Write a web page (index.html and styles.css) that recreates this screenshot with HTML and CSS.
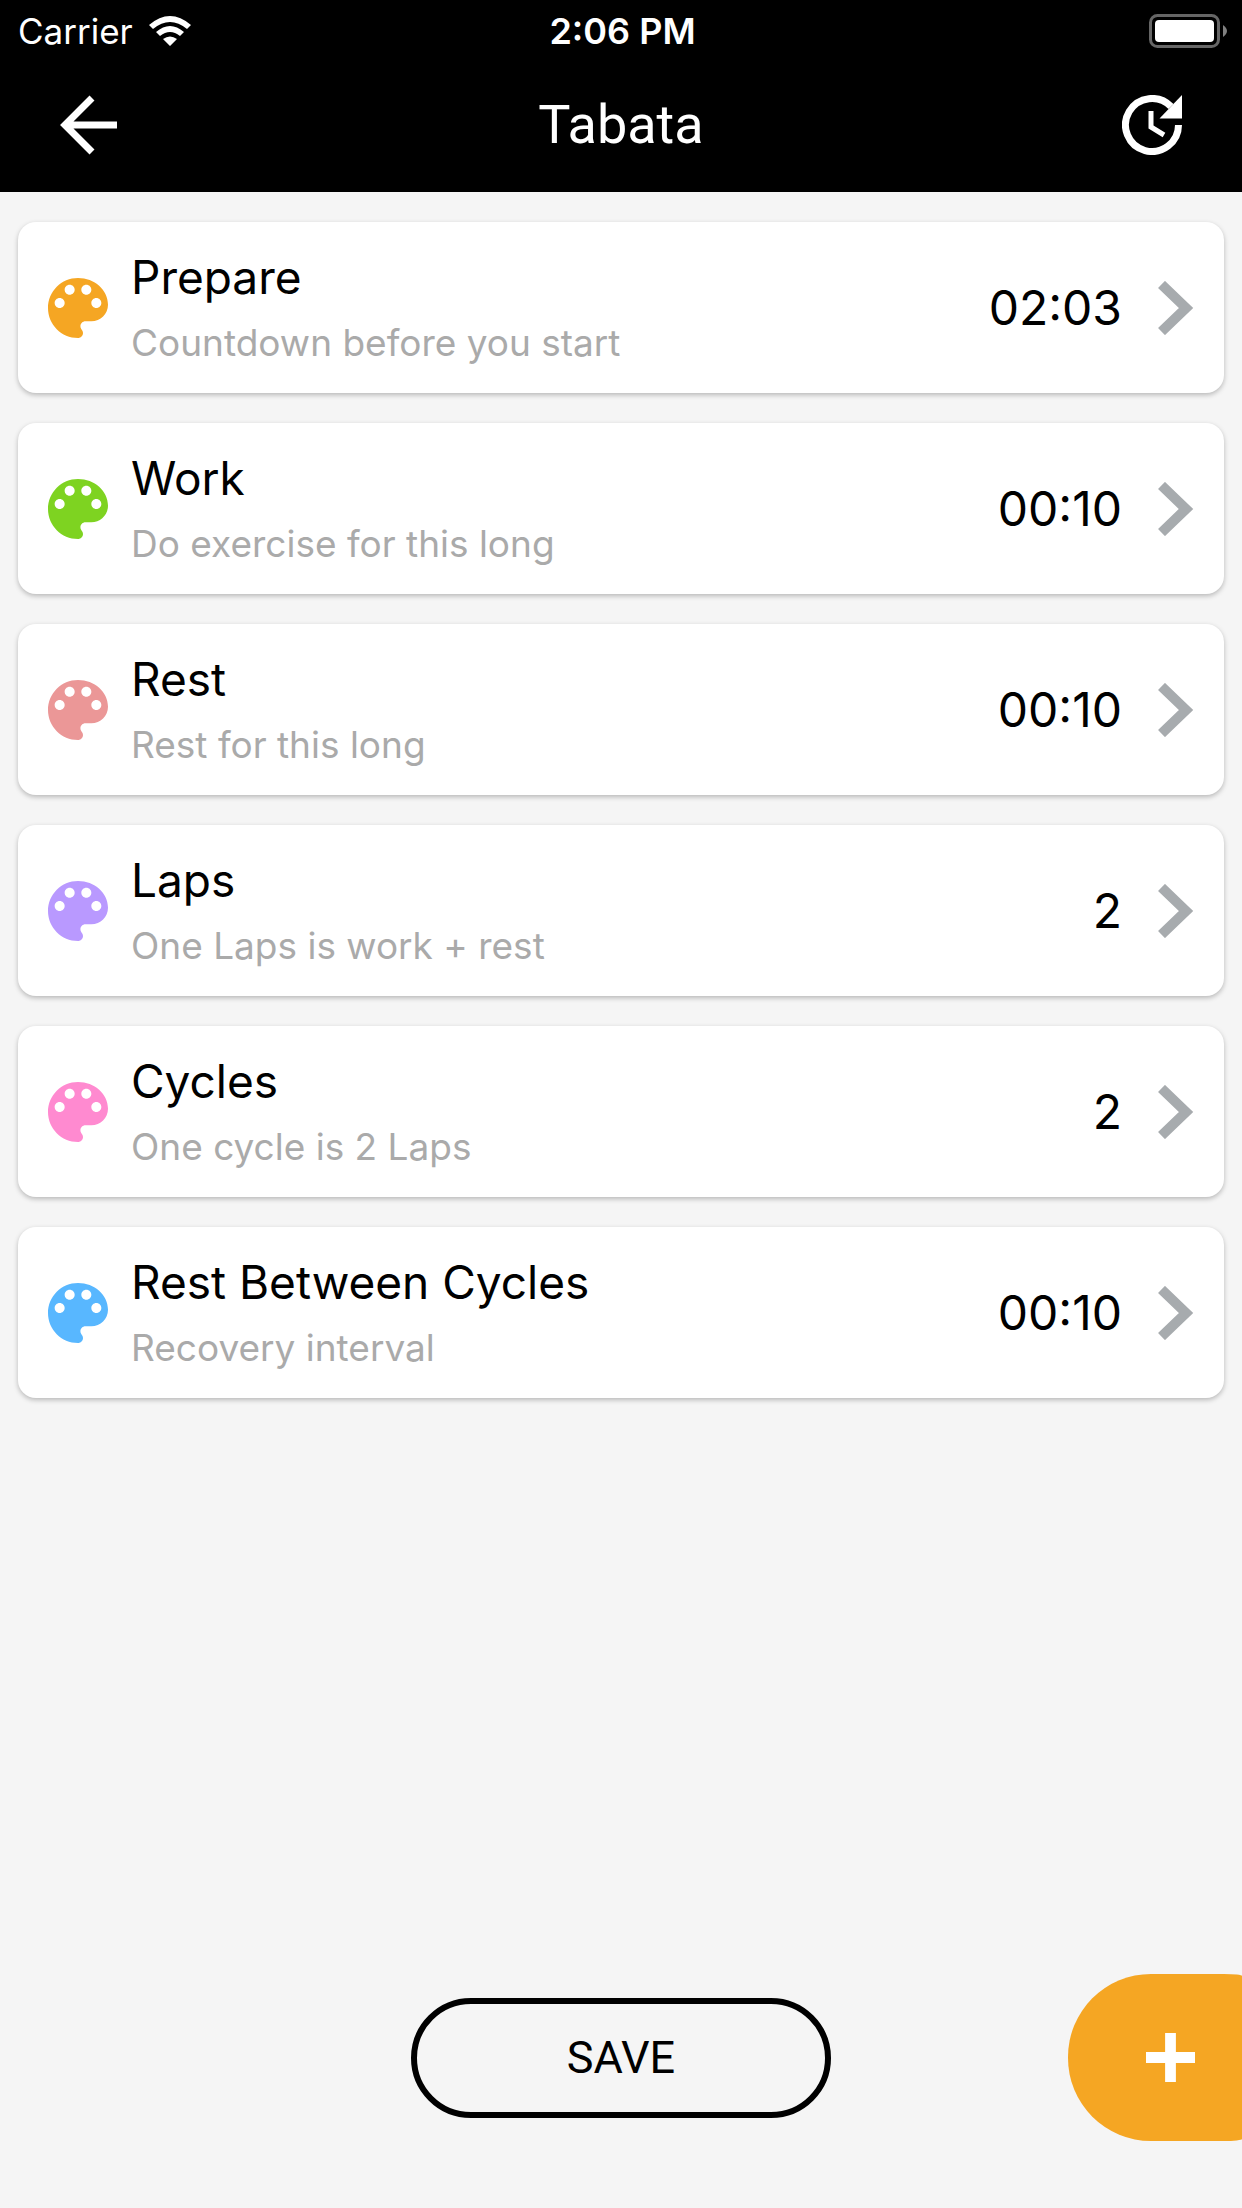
FILE: index.html
```html
<!DOCTYPE html>
<html lang="en">
<head>
<meta charset="utf-8">
<meta name="viewport" content="width=device-width, initial-scale=1">
<title>Tabata</title>
<link rel="stylesheet" href="styles.css">
</head>
<body>
<svg class="defs" aria-hidden="true">
  <symbol id="palette" viewBox="0 0 24 24"><path fill="currentColor" d="M12 3c-4.97 0-9 4.03-9 9s4.030 9 9 9c.83 0 1.500-.67 1.500-1.500 0-.39-.15-.74-.39-1.010-.23-.26-.38-.61-.38-.99 0-.83.67-1.500 1.500-1.500H16c2.760 0 5-2.240 5-5 0-4.420-4.030-8-9-8zm-5.500 9c-.83 0-1.500-.67-1.500-1.500S5.670 9 6.500 9 8 9.670 8 10.500 7.330 12 6.500 12zm3-4C8.670 8 8 7.330 8 6.500S8.670 5 9.500 5s1.500.67 1.500 1.500S10.330 8 9.500 8zm5 0c-.83 0-1.500-.67-1.500-1.500S13.670 5 14.500 5s1.500.67 1.500 1.500S15.330 8 14.500 8zm3 4c-.83 0-1.500-.67-1.500-1.500S16.670 9 17.500 9s1.500.67 1.500 1.500-.67 1.500-1.500 1.500z"/></symbol>
  <symbol id="chevron" viewBox="0 0 36 54"><path fill="none" stroke="#a7abae" stroke-width="10" d="M3.500 3.500L28 27L3.500 50.500"/></symbol>
</svg>
<header class="top">
  <div class="status">
    <div class="carrier"><span>Carrier</span>
      <svg class="wifi" viewBox="0 0 42 30"><path fill="#fff" d="M0 9Q21-9 42 9L38 13Q21-1 4 13ZM7 16Q21 4 35 16L31 20Q21 12 11 20ZM14 23Q21 18 28 23L21 30Z"/></svg>
    </div>
    <time class="clock">2:06 PM</time>
    <svg class="battery" viewBox="0 0 78 34"><rect x="1.500" y="1.500" width="68" height="31" rx="7" fill="none" stroke="#666" stroke-width="3"/><rect x="6" y="6" width="59" height="22" rx="4" fill="#fff"/><path fill="#808080" d="M74 11q8 6 0 12z"/></svg>
  </div>
  <nav class="bar">
    <button class="icon-button" aria-label="Back"><svg viewBox="0 0 60 60"><path fill="none" stroke="#fff" stroke-width="7" d="M57 30H7M32 3L5 30L32 57"/></svg></button>
    <h1>Tabata</h1>
    <button class="icon-button" aria-label="History"><svg viewBox="0 0 60 60"><path fill="none" stroke="#fff" stroke-width="7" d="M56.500 30A26.500 26.500 0 1 1 49 11.500"/><path fill="#fff" d="M60 0V23.500H37.500Z"/><path fill="none" stroke="#fff" stroke-width="5" d="M29 16V32L42 40"/></svg></button>
  </nav>
</header>
<main class="list">
  <button class="card"><svg class="palette orange"><use href="#palette"/></svg><span class="text"><span class="name">Prepare</span><span class="hint">Countdown before you start</span></span><span class="value">02:03</span><svg class="chevron"><use href="#chevron"/></svg></button>
  <button class="card"><svg class="palette green"><use href="#palette"/></svg><span class="text"><span class="name">Work</span><span class="hint">Do exercise for this long</span></span><span class="value">00:10</span><svg class="chevron"><use href="#chevron"/></svg></button>
  <button class="card"><svg class="palette red"><use href="#palette"/></svg><span class="text"><span class="name">Rest</span><span class="hint">Rest for this long</span></span><span class="value">00:10</span><svg class="chevron"><use href="#chevron"/></svg></button>
  <button class="card"><svg class="palette purple"><use href="#palette"/></svg><span class="text"><span class="name">Laps</span><span class="hint">One Laps is work + rest</span></span><span class="value">2</span><svg class="chevron"><use href="#chevron"/></svg></button>
  <button class="card"><svg class="palette pink"><use href="#palette"/></svg><span class="text"><span class="name">Cycles</span><span class="hint">One cycle is 2 Laps</span></span><span class="value">2</span><svg class="chevron"><use href="#chevron"/></svg></button>
  <button class="card"><svg class="palette blue"><use href="#palette"/></svg><span class="text"><span class="name">Rest Between Cycles</span><span class="hint">Recovery interval</span></span><span class="value">00:10</span><svg class="chevron"><use href="#chevron"/></svg></button>
</main>
<footer class="actions">
  <button class="save">SAVE</button>
  <button class="add" aria-label="Add"><svg viewBox="0 0 50 50"><path stroke="#fff" stroke-width="11" d="M25 0V50M0 25H50"/></svg></button>
</footer>
</body>
</html>
```
FILE: styles.css
```css
* {
  box-sizing: border-box;
}

body {
  margin: 0;
  min-height: 100vh;
  display: flex;
  flex-direction: column;
  background: #f5f5f5;
  color: #000;
  font-family: Inter, "Liberation Sans", sans-serif;
}

button {
  margin: 0;
  padding: 0;
  border: 0;
  background: none;
  color: inherit;
  font: inherit;
  cursor: pointer;
}

svg {
  display: block;
  flex: none;
}

.defs {
  position: absolute;
  width: 0;
  height: 0;
}

.top {
  background: #000;
  color: #fff;
}

.status {
  display: grid;
  grid-template-columns: 1fr auto 1fr;
  align-items: center;
  height: 60px;
  padding: 2px 15px 0 18px;
  font-size: 35px;
}

.carrier {
  display: flex;
  align-items: center;
  gap: 16px;
}

.wifi {
  width: 42px;
  height: 30px;
}

.clock {
  font-size: 36px;
  font-weight: 600;
}

.battery {
  width: 78px;
  height: 34px;
  justify-self: end;
}

.bar {
  display: flex;
  align-items: center;
  justify-content: space-between;
  height: 132px;
  padding: 0 60px 2px;
}

.bar h1 {
  margin: 0;
  font: 400 54px/64px Roboto, sans-serif;
}

.icon-button svg {
  width: 60px;
  height: 60px;
}

.list {
  display: flex;
  flex-direction: column;
  gap: 30px;
  padding: 30px 18px;
}

.card {
  display: flex;
  align-items: center;
  height: 171px;
  padding: 0 30px 0 20px;
  border-radius: 18px;
  background: #fff;
  box-shadow: 0 2px 5px rgba(0, 0, 0, 0.25);
  text-align: left;
}

.palette {
  width: 80px;
  height: 80px;
}

.text {
  display: flex;
  flex: 1;
  flex-direction: column;
  padding: 2px 0 0 13px;
}

.name {
  font-size: 46px;
  line-height: 68px;
}

.hint {
  color: #aaa;
  font-size: 37px;
  line-height: 64px;
}

.value {
  font-size: 48px;
  line-height: 64px;
}

.chevron {
  width: 36px;
  height: 54px;
  margin-left: 36px;
}

.orange { color: #f5a623; }
.green { color: #7ed321; }
.red { color: #eb9797; }
.purple { color: #b999ff; }
.pink { color: #ff8ad0; }
.blue { color: #58b7ff; }

.actions {
  display: grid;
  grid-template-columns: 1fr auto 1fr;
  align-items: center;
  margin-top: auto;
  padding-bottom: 67px;
}

.save {
  grid-column: 2;
  width: 420px;
  height: 120px;
  border: 6px solid #000;
  border-radius: 60px;
  font: 400 45px/52px Roboto, sans-serif;
}

.add {
  display: flex;
  align-items: center;
  justify-self: end;
  width: 174px;
  height: 167px;
  padding-left: 78px;
  border-radius: 83px 18px 18px 83px / 83px 2px 2px 83px;
  background: #f5a623;
}

.add svg {
  width: 49px;
  height: 49px;
}
```
